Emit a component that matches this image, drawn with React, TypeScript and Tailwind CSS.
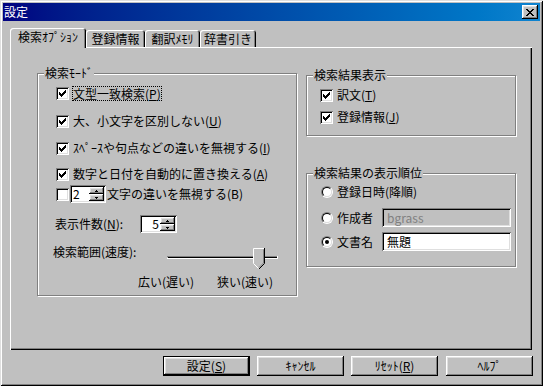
import React from "react";

const font = "font-['Noto_Sans_CJK_JP','Noto_Sans_CJK_SC',sans-serif]";
const raised =
  "shadow-[inset_-1px_-1px_0_#000,inset_1px_1px_0_#fff,inset_-2px_-2px_0_#808080,inset_2px_2px_0_#dfdfdf]";
const sunken =
  "shadow-[inset_1px_1px_0_#808080,inset_-1px_-1px_0_#fff,inset_2px_2px_0_#000,inset_-2px_-2px_0_#dfdfdf]";

function CheckBox({ checked = false }: { checked?: boolean }) {
  return (
    <span className={`flex h-[13px] w-[13px] shrink-0 items-center justify-center bg-white ${sunken}`}>
      {checked && (
        <svg width="7" height="7" viewBox="0 0 7 7" shapeRendering="crispEdges">
          <path
            d="M6 0h1v1H6zM5 1h2v1H5zM0 2h1v1H0zM4 2h3v1H4zM0 3h2v1H0zM3 3h3v1H3zM0 4h5v1H0zM1 5h3v1H1zM2 6h1v1H2z"
            fill="#000"
          />
        </svg>
      )}
    </span>
  );
}

function Radio({ checked = false }: { checked?: boolean }) {
  return (
    <span className="flex h-[12px] w-[12px] shrink-0 items-center justify-center rounded-full border border-t-[#808080] border-l-[#808080] border-r-white border-b-white">
      <span className="flex h-[10px] w-[10px] items-center justify-center rounded-full border border-t-black border-l-black border-r-[#dfdfdf] border-b-[#dfdfdf] bg-white">
        {checked && <span className="h-[4px] w-[4px] rounded-full bg-black" />}
      </span>
    </span>
  );
}

function SpinButtons() {
  return (
    <div className="flex w-[15px] shrink-0 flex-col">
      <div className={`flex h-[7px] items-center justify-center bg-[#c0c0c0] ${raised}`}>
        <svg width="3" height="2" viewBox="0 0 3 2" shapeRendering="crispEdges">
          <path d="M1 0h1v1H1zM0 1h3v1H0z" fill="#000" />
        </svg>
      </div>
      <div className={`flex h-[7px] items-center justify-center bg-[#c0c0c0] ${raised}`}>
        <svg width="3" height="2" viewBox="0 0 3 2" shapeRendering="crispEdges">
          <path d="M0 0h3v1H0zM1 1h1v1H1z" fill="#000" />
        </svg>
      </div>
    </div>
  );
}

function Group({
  label,
  className,
  children,
}: React.PropsWithChildren<{ label: string; className: string }>) {
  return (
    <div
      className={`relative flex flex-col border border-[#808080] shadow-[inset_1px_1px_0_#fff,1px_1px_0_#fff] ${className}`}
    >
      <span className="absolute -top-[9px] left-[6px] bg-[#c0c0c0] px-[1px] leading-[16px]">{label}</span>
      {children}
    </div>
  );
}

function Tab({ label, active = false, className }: { label: string; active?: boolean; className: string }) {
  const base =
    "flex items-center justify-center rounded-t-[3px] bg-[#c0c0c0] shadow-[inset_1px_1px_0_#fff,inset_-1px_0_0_#000,inset_-2px_0_0_#808080]";
  return active ? (
    <div className={`relative z-10 -mb-px h-[20px] pb-[2px] ${base} ${className}`}>{label}</div>
  ) : (
    <div className={`h-[17px] ${base} ${className}`}>{label}</div>
  );
}

function Button({ children, primary = false }: React.PropsWithChildren<{ primary?: boolean }>) {
  return primary ? (
    <button className="h-[20px] w-[87px] border border-black bg-[#c0c0c0]">
      <span className={`flex h-full w-full items-center justify-center ${raised}`}>{children}</span>
    </button>
  ) : (
    <button className={`flex h-[20px] w-[87px] items-center justify-center bg-[#c0c0c0] ${raised}`}>
      {children}
    </button>
  );
}

function Slider() {
  return (
    <svg width="124" height="24" viewBox="0 0 124 24" className="mt-[2px] shrink-0">
      <rect x="7" y="10" width="110" height="1" fill="#808080" />
      <rect x="8" y="11" width="109" height="1" fill="#000" />
      <rect x="7" y="12" width="111" height="1" fill="#fff" />
      <rect x="117" y="10" width="1" height="3" fill="#fff" />
      <polygon points="93,2 105,2 105,17 99,23 93,17" fill="#c0c0c0" />
      <path d="M93.5 17.5V2.5H104.5" stroke="#fff" fill="none" />
      <path d="M93.5 17.5L98.5 22.5" stroke="#fff" fill="none" />
      <path d="M104.5 2V17.5L99 23" stroke="#000" fill="none" />
      <path d="M103.5 3.5V17L99 21.5" stroke="#808080" fill="none" />
    </svg>
  );
}

export default function App() {
  return (
    <div
      className={`flex h-[386px] w-[543px] flex-col bg-[#c0c0c0] p-[3px] text-[12px] leading-[16px] text-black ${font} shadow-[inset_1px_1px_0_#dfdfdf,inset_-1px_-1px_0_#000,inset_2px_2px_0_#fff,inset_-2px_-2px_0_#808080]`}
    >
      {/* title bar */}
      <div className="flex h-[18px] shrink-0 items-center bg-linear-to-r from-[#000080] to-[#1084d0] pl-[1px] pr-[2px]">
        <span className="text-white">設定</span>
        <button className={`ml-auto flex h-[14px] w-[16px] items-center justify-center bg-[#c0c0c0] ${raised}`}>
          <svg width="8" height="7" viewBox="0 0 8 7" shapeRendering="crispEdges">
            <path
              d="M0 0h2v1H0zM6 0h2v1H6zM1 1h2v1H1zM5 1h2v1H5zM2 2h4v1H2zM3 3h2v1H3zM2 4h4v1H2zM1 5h2v1H1zM5 5h2v1H5zM0 6h2v1H0zM6 6h2v1H6z"
              fill="#000"
            />
          </svg>
        </button>
      </div>

      <div className="flex flex-1 flex-col px-[7px]">
        {/* tabs */}
        <div className="mt-[7px] flex h-[19px] items-end">
          <Tab label="検索ｵﾌﾟｼｮﾝ" active className="w-[76px]" />
          <Tab label="登録情報" className="w-[59px]" />
          <Tab label="翻訳ﾒﾓﾘ" className="w-[55px]" />
          <Tab label="辞書引き" className="w-[56px]" />
        </div>

        {/* tab page */}
        <div className="flex h-[303px] w-[522px] items-start pl-[27px] pt-[26px] shadow-[inset_1px_1px_0_#fff,inset_-1px_-1px_0_#000,inset_-2px_-2px_0_#808080]">
          <Group label="検索ﾓｰﾄﾞ" className="h-[223px] w-[260px]">
            <div className="mt-[11px] flex h-[16px] items-center pl-[18px]">
              <CheckBox checked />
              <span className="ml-[4px] leading-[13px] outline-1 outline-dotted outline-black">
                文型一致検索(<u>P</u>)
              </span>
            </div>
            <div className="mt-[12px] flex h-[16px] items-center pl-[18px]">
              <CheckBox checked />
              <span className="ml-[4px]">大、小文字を区別しない(<u>U</u>)</span>
            </div>
            <div className="mt-[11px] flex h-[16px] items-center pl-[18px]">
              <CheckBox checked />
              <span className="ml-[4px]">ｽﾍﾟｰｽや句点などの違いを無視する(<u>I</u>)</span>
            </div>
            <div className="mt-[10px] flex h-[16px] items-center pl-[18px]">
              <CheckBox checked />
              <span className="ml-[4px]">数字と日付を自動的に置き換える(<u>A</u>)</span>
            </div>
            <div className="mt-[3px] flex h-[18px] items-center pl-[18px]">
              <CheckBox />
              <div className={`ml-[1px] flex h-[18px] w-[36px] bg-white p-[2px] ${sunken}`}>
                <span className="flex-1 pl-[1px] leading-[14px]">2</span>
                <SpinButtons />
              </div>
              <span className="ml-[1px]">文字の違いを無視する(B)</span>
            </div>
            <div className="mt-[12px] flex h-[18px] items-center pl-[17px]">
              <span className="w-[85px]">
                表示件数(<u>N</u>):
              </span>
              <div className={`flex h-[18px] w-[37px] bg-white p-[2px] ${sunken}`}>
                <span className="flex-1 pr-[1px] text-right leading-[14px]">5</span>
                <SpinButtons />
              </div>
            </div>
            <div className="mt-[11px] flex items-start pl-[15px]">
              <span className="w-[107px]">検索範囲(速度):</span>
              <Slider />
            </div>
            <div className="mt-[4px] flex h-[16px] items-center pl-[100px]">
              <span className="w-[79px]">広い(遅い)</span>
              <span>狭い(速い)</span>
            </div>
          </Group>

          <div className="ml-[9px] mt-[2px] flex flex-col">
            <Group label="検索結果表示" className="h-[61px] w-[210px]">
              <div className="mt-[11px] flex h-[16px] items-center pl-[13px]">
                <CheckBox checked />
                <span className="ml-[4px]">
                  訳文(<u>T</u>)
                </span>
              </div>
              <div className="mt-[6px] flex h-[16px] items-center pl-[13px]">
                <CheckBox checked />
                <span className="ml-[4px]">
                  登録情報(<u>J</u>)
                </span>
              </div>
            </Group>

            <Group label="検索結果の表示順位" className="mt-[37px] h-[94px] w-[210px]">
              <div className="mt-[10px] flex h-[16px] items-center pl-[14px]">
                <Radio />
                <span className="ml-[4px]">登録日時(降順)</span>
              </div>
              <div className="mt-[8px] flex h-[19px] items-center pl-[14px]">
                <Radio />
                <span className="ml-[4px] w-[45px]">作成者</span>
                <div className={`flex h-[19px] w-[129px] items-center bg-[#c0c0c0] pl-[5px] text-[#808080] ${sunken}`}>
                  bgrass
                </div>
              </div>
              <div className="mt-[5px] flex h-[19px] items-center pl-[14px]">
                <Radio checked />
                <span className="ml-[4px] w-[45px]">文書名</span>
                <div className={`flex h-[19px] w-[129px] items-center bg-white pl-[5px] ${sunken}`}>無題</div>
              </div>
            </Group>
          </div>
        </div>

        {/* buttons */}
        <div className="mt-[6px] flex justify-end gap-[7px]">
          <Button primary>
            設定(<u>S</u>)
          </Button>
          <Button>ｷｬﾝｾﾙ</Button>
          <Button>
            ﾘｾｯﾄ(<u>R</u>)
          </Button>
          <div className="ml-px">
            <Button>ﾍﾙﾌﾟ</Button>
          </div>
        </div>
      </div>
    </div>
  );
}
